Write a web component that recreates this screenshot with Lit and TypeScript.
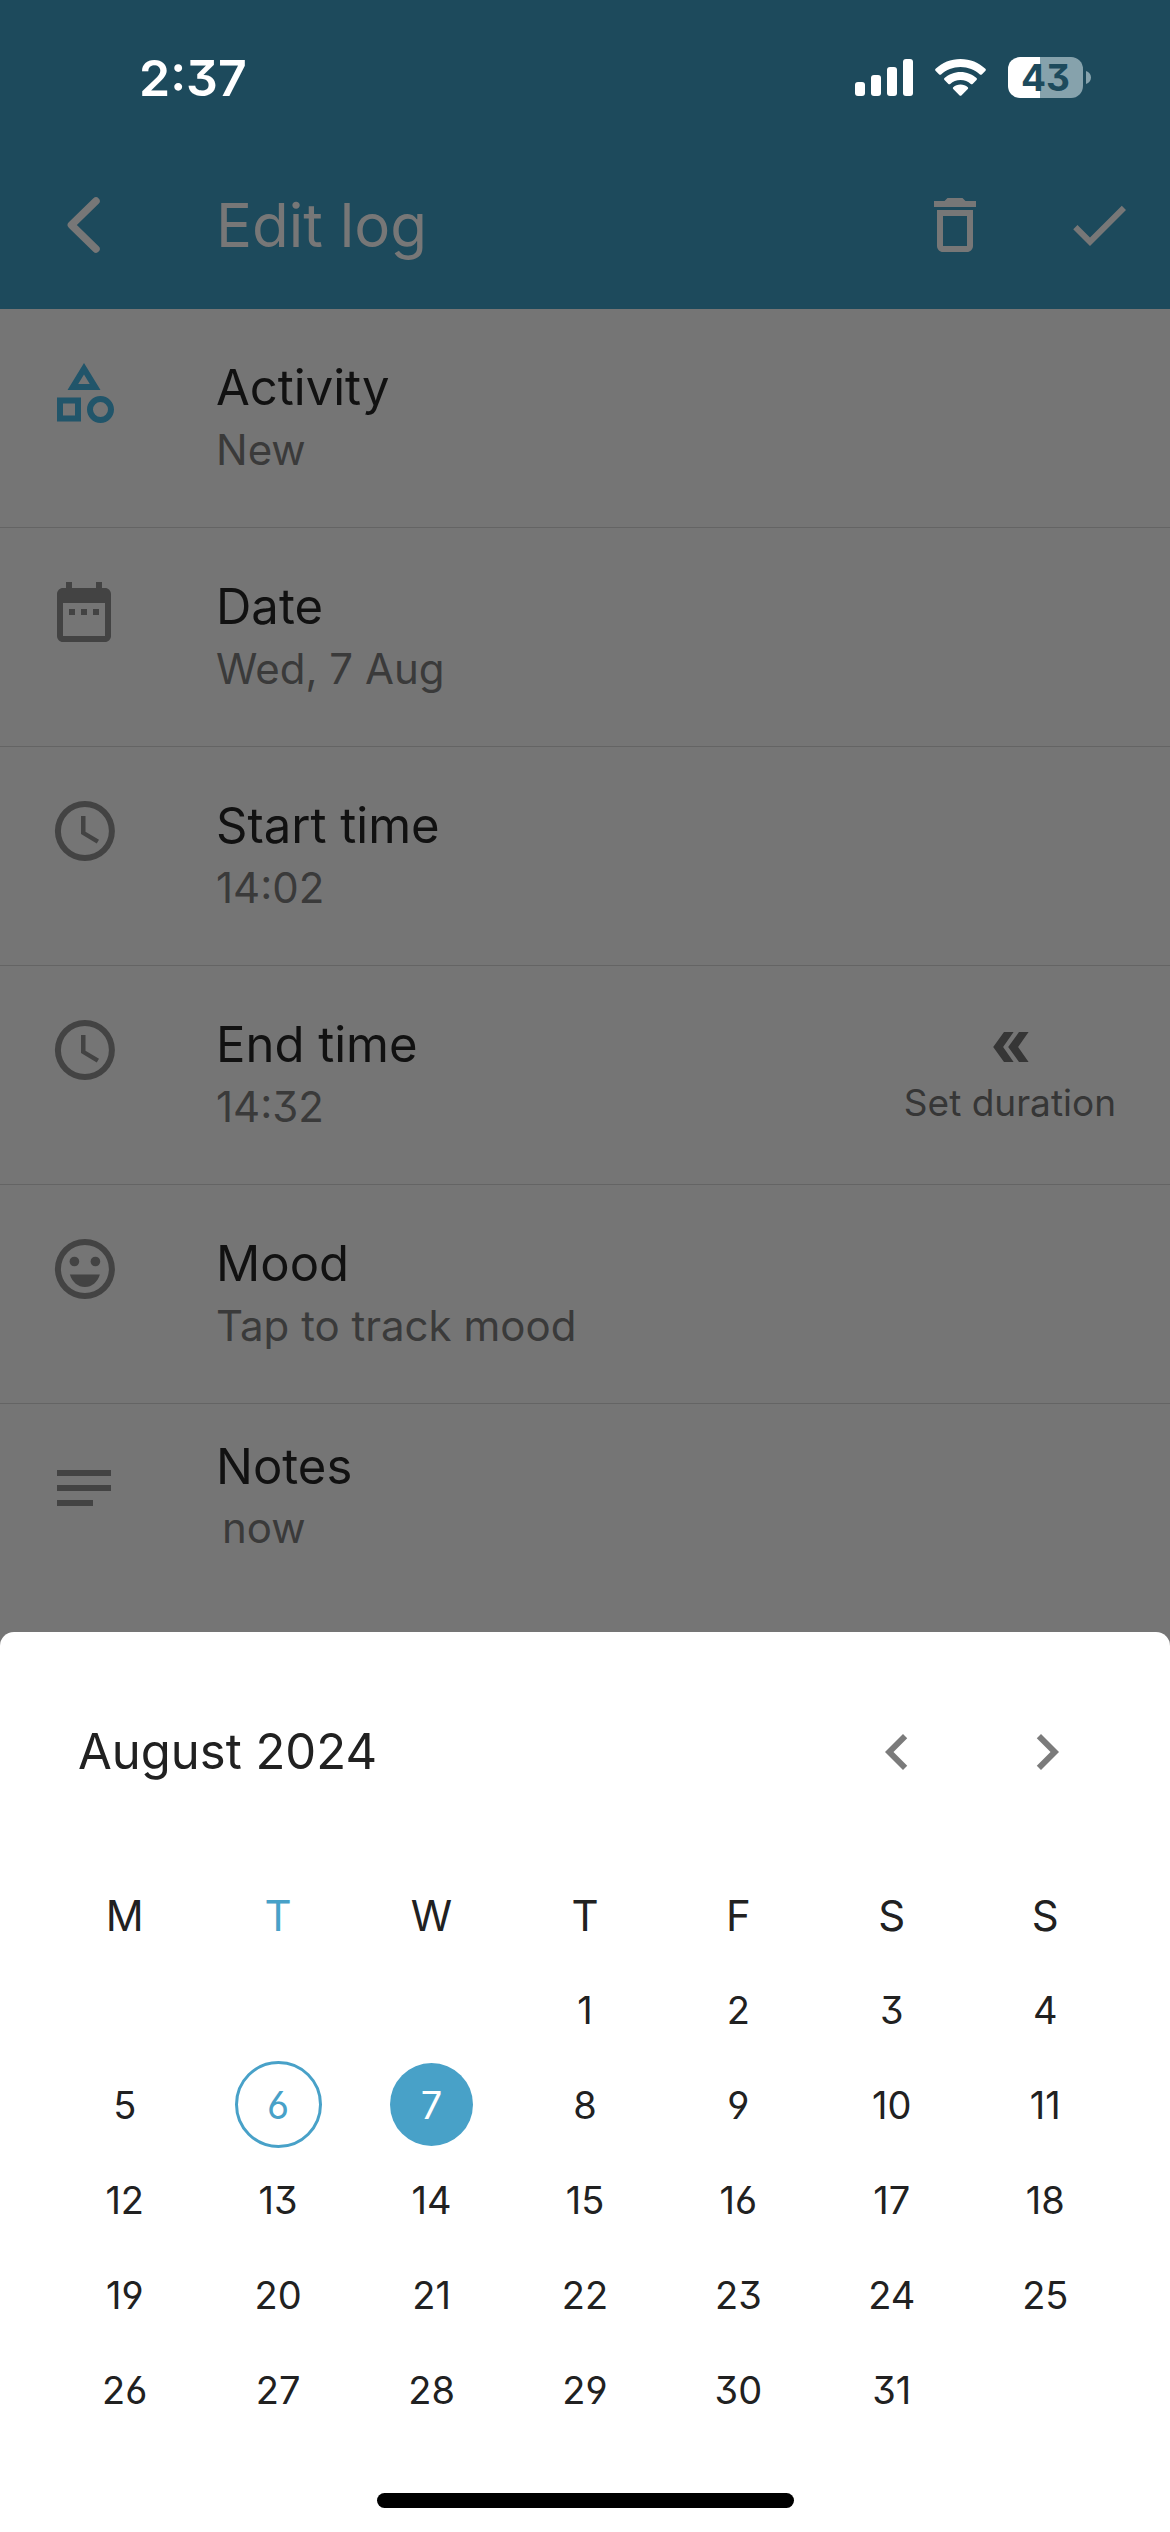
import { LitElement, html, css, svg, nothing } from "lit";
import { customElement, state } from "lit/decorators.js";
import { classMap } from "lit/directives/class-map.js";

const ICONS = {
  category: svg`<path d="M12 2l-5.5 9h11L12 2zm0 3.84L13.93 9h-3.87L12 5.84zM17.5 13c-2.49 0-4.5 2.01-4.5 4.5s2.01 4.5 4.5 4.5 4.5-2.01 4.5-4.5-2.01-4.5-4.5-4.5zm0 7a2.5 2.5 0 010-5 2.5 2.5 0 010 5zM3 21.5h8v-8H3v8zm2-6h4v4H5v-4z"/>`,
  calendar: svg`<path d="M9 11H7v2h2v-2zm4 0h-2v2h2v-2zm4 0h-2v2h2v-2zm2-7h-1V2h-2v2H8V2H6v2H5c-1.1 0-2 .9-2 2v14c0 1.1.9 2 2 2h14c1.1 0 2-.9 2-2V6c0-1.1-.9-2-2-2zm0 16H5V9h14v11z"/>`,
  clock: svg`<path d="M12.3 2a10 10 0 100 20 10 10 0 000-20zm0 18a8 8 0 110-16 8 8 0 010 16zm.2-13H11v6l5.25 3.15.75-1.23-4.5-2.67z"/>`,
  mood: svg`<path d="M12.3 2a10 10 0 100 20 10 10 0 000-20zm0 18a8 8 0 110-16 8 8 0 010 16z"/><circle cx="8.8" cy="9.5" r="1.6"/><circle cx="15.8" cy="9.5" r="1.6"/><path d="M12.3 18c2.28 0 4.22-1.66 5-4.2h-10c.78 2.54 2.72 4.2 5 4.2z"/>`,
  notes: svg`<path d="M3 6h18v2H3zM3 11h18v2H3zM3 16h12v2H3z"/>`,
  trash: svg`<path d="M6 19c0 1.1.9 2 2 2h8c1.1 0 2-.9 2-2V7H6v12zM8 9h8v10H8V9zm7.5-5l-1-1h-5l-1 1H5v2h14V4z"/>`,
  check: svg`<path d="M9 16.17L4.83 12l-1.42 1.41L9 19 21 7l-1.41-1.41z"/>`,
  back: svg`<path d="M16 4L7.8 12l8.200 8" fill="none" stroke="currentColor" stroke-width="2.5" stroke-linecap="round" stroke-linejoin="round"/>`,
  prev: svg`<path d="M15.41 7.41L14 6l-6 6 6 6 1.41-1.41L10.83 12z"/>`,
  next: svg`<path d="M10 6L8.59 7.41 13.17 12l-4.58 4.59L10 18l6-6z"/>`,
  rewind: svg`<path d="M10 7h3.2L9.7 12l3.500 5H10l-3.6-5zM15 7h3.2l-3.500 5 3.500 5H15l-3.6-5z"/>`,
};

type IconName = keyof typeof ICONS;

const icon = (name: IconName) => html`
  <svg class="icon" viewBox="0 0 24 24" fill="currentColor" aria-hidden="true">${ICONS[name]}</svg>
`;

interface LogRow {
  icon: IconName;
  title: string;
  value: string;
  accent?: boolean;
  duration?: boolean;
}

const ROWS: LogRow[] = [
  { icon: "category", title: "Activity", value: "New", accent: true },
  { icon: "calendar", title: "Date", value: "Wed, 7 Aug" },
  { icon: "clock", title: "Start time", value: "14:02" },
  { icon: "clock", title: "End time", value: "14:32", duration: true },
  { icon: "mood", title: "Mood", value: "Tap to track mood" },
];

@customElement("status-bar")
export class StatusBar extends LitElement {
  static styles = css`
    :host {
      display: flex;
      justify-content: space-between;
      align-items: center;
      height: 141px;
      padding: 14px 79px 0 139px;
      box-sizing: border-box;
      color: #fff;
    }
    .time {
      font-size: 50px;
      line-height: 60px;
      font-weight: 600;
    }
    .signals {
      display: flex;
      align-items: center;
      gap: 22px;
    }
    svg {
      display: block;
    }
    .battery {
      display: flex;
      align-items: center;
      gap: 3px;
    }
    .cell {
      display: flex;
      align-items: center;
      justify-content: center;
      width: 75px;
      height: 41px;
      border-radius: 12px;
      background: linear-gradient(to right, #fff 43%, #86a2ac 43%);
      color: #1d4a5c;
      font-size: 37px;
      line-height: 41px;
      font-weight: 700;
    }
  `;

  render() {
    return html`
      <span class="time">2:37</span>
      <div class="signals">
        <svg width="58" height="38" viewBox="0 0 58 38" fill="#fff" aria-hidden="true">
          <rect x="0" y="23" width="10" height="14" rx="3" />
          <rect x="16" y="16" width="10" height="21" rx="3" />
          <rect x="32" y="8" width="10" height="29" rx="3" />
          <rect x="48" y="0" width="10" height="37" rx="3" />
        </svg>
        <svg width="51" height="38" viewBox="0 0 51 38" fill="#fff" aria-hidden="true">
          <path d="M25.500 0C15.800 0 7 3.700.6 9.800c-.6.6-.6 1.300-.1 1.900l3.700 3.700c.6.6 1.300.6 1.900 0C11.200 10.700 18 7.900 25.500 7.900s14.300 2.800 19.400 7.500c.6.6 1.300.6 1.900 0l3.700-3.700c.5-.6.5-1.300-.1-1.900C44 3.700 35.200 0 25.500 0z" />
          <path d="M25.500 12.900c-6.200 0-11.800 2.300-16 6.200-.6.6-.6 1.300 0 1.900l3.900 3.900c.6.5 1.200.5 1.800 0 2.700-2.400 6.300-3.900 10.300-3.900s7.600 1.500 10.300 3.900c.6.5 1.200.5 1.800 0l3.900-3.900c.6-.6.6-1.300 0-1.900-4.200-3.900-9.800-6.200-16-6.200z" />
          <path d="M25.500 25.500c-2.800 0-5.300 1-7.300 2.700-.5.5-.5 1.200 0 1.700l6.400 6.500c.6.6 1.200.6 1.800 0l6.400-6.500c.5-.5.5-1.200 0-1.700-2-1.700-4.500-2.700-7.300-2.700z" />
        </svg>
        <div class="battery">
          <span class="cell">43</span>
          <svg width="5" height="13" viewBox="0 0 5 13" fill="#86a2ac" aria-hidden="true">
            <path d="M0 0c3 1 5 3.500 5 6.500S3 12 0 13z" />
          </svg>
        </div>
      </div>
    `;
  }
}

@customElement("date-sheet")
export class DateSheet extends LitElement {
  @state() private selected = 7;

  private readonly today = 6;
  private readonly weekdays = ["M", "T", "W", "T", "F", "S", "S"];
  private readonly firstOffset = 3;
  private readonly dayCount = 31;

  static styles = css`
    :host {
      display: flex;
      flex-direction: column;
      align-items: stretch;
      box-sizing: border-box;
      padding: 48px 48px 24px;
      border-radius: 14px 14px 0 0;
      background: #fff;
      color: #212121;
    }
    .head {
      display: flex;
      align-items: center;
      height: 144px;
      padding-left: 30px;
    }
    .month {
      flex: 1;
      margin: 0;
      font-size: 49px;
      line-height: 62px;
      font-weight: 400;
    }
    button {
      display: flex;
      align-items: center;
      justify-content: center;
      padding: 0;
      border: 0;
      background: none;
      font: inherit;
      color: inherit;
      cursor: pointer;
    }
    .nav {
      width: 150px;
      height: 144px;
      color: #7b7b7b;
    }
    .icon {
      display: block;
      width: 72px;
      height: 72px;
    }
    table {
      width: 100%;
      margin-top: 46px;
      table-layout: fixed;
      border-collapse: collapse;
    }
    th {
      height: 92px;
      padding: 0;
      font-size: 42px;
      line-height: 62px;
      font-weight: 400;
    }
    th.current {
      color: #48a1c8;
    }
    td {
      height: 95px;
      padding: 0;
      font-size: 38px;
      line-height: 48px;
    }
    .day {
      box-sizing: border-box;
      width: 87px;
      height: 87px;
      margin: 0 auto;
      border: 2px solid transparent;
      border-radius: 50%;
      background-clip: padding-box;
    }
    .today {
      border: 3px solid #48a1c8;
      color: #48a1c8;
    }
    .selected {
      background-color: #48a1c8;
      color: #fff;
    }
    .home {
      align-self: center;
      width: 417px;
      height: 15px;
      margin-top: 56px;
      border-radius: 8px;
      background: #000;
    }
  `;

  private weeks(): number[][] {
    const weeks: number[][] = [];
    for (let start = 1 - this.firstOffset; start <= this.dayCount; start += 7) {
      weeks.push(Array.from({ length: 7 }, (_, i) => start + i));
    }
    return weeks;
  }

  private renderDay(day: number) {
    if (day < 1 || day > this.dayCount) return html`<td></td>`;
    const selected = day === this.selected;
    return html`<td>
      <button
        class=${classMap({ day: true, today: day === this.today && !selected, selected })}
        aria-pressed=${selected ? "true" : "false"}
        @click=${() => (this.selected = day)}
      >${day}</button>
    </td>`;
  }

  render() {
    return html`
      <div class="head">
        <h2 class="month">August 2024</h2>
        <button class="nav" aria-label="Previous month">${icon("prev")}</button>
        <button class="nav" aria-label="Next month">${icon("next")}</button>
      </div>
      <table>
        <thead>
          <tr>
            ${this.weekdays.map((d, i) => html`<th scope="col" class=${classMap({ current: i === 1 })}>${d}</th>`)}
          </tr>
        </thead>
        <tbody>
          ${this.weeks().map((week) => html`<tr>${week.map((d) => this.renderDay(d))}</tr>`)}
        </tbody>
      </table>
      <div class="home"></div>
    `;
  }
}

@customElement("app-root")
export class AppRoot extends LitElement {
  static styles = css`
    :host {
      display: flex;
      flex-direction: column;
      min-height: 100vh;
      background: #757575;
      color: #111;
      font-family: Inter, Roboto, "Liberation Sans", sans-serif;
      font-feature-settings: "cv03", "cv04", "cv09";
    }
    button {
      padding: 0;
      border: 0;
      background: none;
      font: inherit;
      color: inherit;
      text-align: left;
      cursor: pointer;
    }
    .icon {
      display: block;
      flex: none;
      width: 72px;
      height: 72px;
    }
    .top {
      background: #1d4a5c;
      color: #777;
    }
    .toolbar {
      display: flex;
      align-items: center;
      height: 168px;
      padding: 0 35px 0 48px;
    }
    .toolbar h1 {
      flex: 1;
      margin: 0;
      padding-left: 96px;
      font-size: 60px;
      line-height: 72px;
      font-weight: 400;
    }
    .actions {
      display: flex;
      gap: 72px;
    }
    .list {
      flex: 1;
    }
    .row {
      display: flex;
      align-items: stretch;
      border-bottom: 1px solid #646464;
    }
    .entry {
      display: flex;
      flex: 1;
      gap: 96px;
      padding: 48px 48px 46px;
    }
    .entry .icon {
      color: #434343;
    }
    .entry .accent .icon {
      color: #21556a;
    }
    .text {
      display: flex;
      flex-direction: column;
    }
    .title {
      font-size: 49px;
      line-height: 62px;
    }
    .value {
      color: #3a3a3a;
      font-size: 42px;
      line-height: 62px;
    }
    .duration {
      display: flex;
      flex-direction: column;
      align-items: center;
      padding: 45px 54px 0 48px;
      color: #363636;
      font-size: 37px;
      line-height: 40px;
    }
    .memo {
      display: flex;
      gap: 96px;
      padding: 32px 48px;
    }
    .memo .mark {
      padding-top: 16px;
      color: #434343;
    }
    .memo .text {
      flex: 1;
    }
    .memo input {
      width: 100%;
      height: 60px;
      box-sizing: border-box;
      padding: 0 6px;
      border: 0;
      outline: 0;
      background: none;
      color: #3a3a3a;
      font: inherit;
      font-size: 42px;
      line-height: 60px;
    }
  `;

  private renderRow(row: LogRow) {
    return html`
      <div class="row">
        <button class="entry">
          <span class=${classMap({ accent: !!row.accent })}>${icon(row.icon)}</span>
          <span class="text">
            <span class="title">${row.title}</span>
            <span class="value">${row.value}</span>
          </span>
        </button>
        ${row.duration
          ? html`<button class="duration">${icon("rewind")}<span>Set duration</span></button>`
          : nothing}
      </div>
    `;
  }

  render() {
    return html`
      <header class="top">
        <status-bar></status-bar>
        <div class="toolbar">
          <button aria-label="Back">${icon("back")}</button>
          <h1>Edit log</h1>
          <div class="actions">
            <button aria-label="Delete">${icon("trash")}</button>
            <button aria-label="Save">${icon("check")}</button>
          </div>
        </div>
      </header>
      <main class="list">
        ${ROWS.map((row) => this.renderRow(row))}
        <div class="memo">
          <span class="mark">${icon("notes")}</span>
          <div class="text">
            <label class="title" for="notes">Notes</label>
            <input id="notes" type="text" .value=${"now"} />
          </div>
        </div>
      </main>
      <date-sheet></date-sheet>
    `;
  }
}
